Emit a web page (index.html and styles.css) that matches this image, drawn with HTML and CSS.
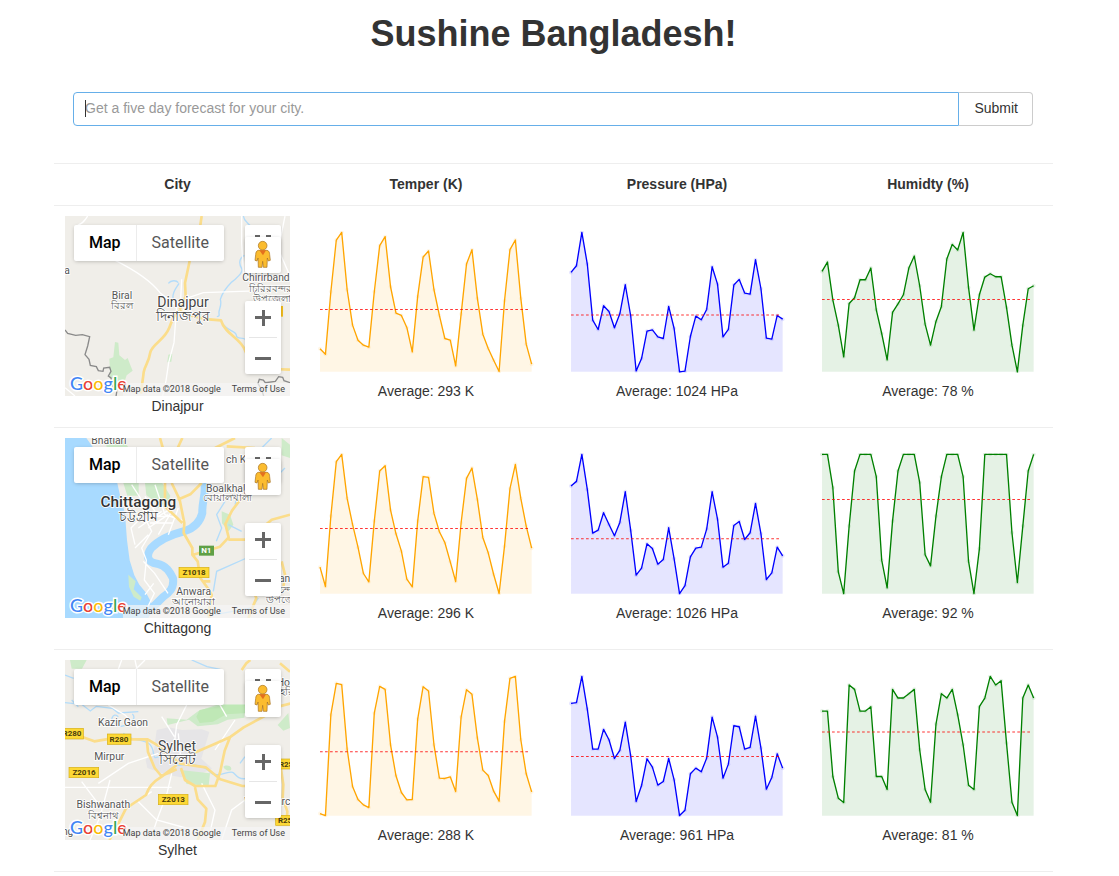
FILE: index.html
```
<!DOCTYPE html>
<html lang="en">
<head>
<meta charset="utf-8">
<meta name="viewport" content="width=device-width, initial-scale=1">
<title>Sushine Bangladesh!</title>
<link rel="stylesheet" href="styles.css">
</head>
<body>
<main class="page">
  <h1 class="title">Sushine Bangladesh!</h1>
  <form class="search">
    <div class="search-field">
      <input class="search-input" type="text" aria-label="City" placeholder="Get a five day forecast for your city.">
    </div>
    <button class="search-button" type="submit">Submit</button>
  </form>

  <table class="forecast">
    <thead>
      <tr><th class="city-col">City</th><th>Temper (K)</th><th>Pressure (HPa)</th><th>Humidty (%)</th></tr>
    </thead>
    <tbody>
      <tr>
        <td class="city">
          <div class="map">
            <svg class="map-canvas" viewBox="30 30 675 540" role="img" aria-label="Map of Dinajpur">
              <rect class="land" x="30" y="30" width="675" height="540"/>
              <path class="park" d="M180 408l10 2 3 38 17 14 8-6 10 26 5 12-18 14-6 18-20 4-12-12-14-4 2-20-2-36 12-4z"/>
              <path class="park" d="M340 446l12-3-3 24-12 2z"/>
              <path class="water" d="M565 30c2 18 16 20 22 32M340 232c8-10 24-10 30-2M372 232c-8 14-20 24-18 44M568 148c-20 12-14 30-8 40s-18 32-32 42c-14 14-26 30-32 50 6 20-6 30-4 42s-4 8-6 10M500 348c14 28 44 26 44 40s20 4 26 12"/>
              <path class="lane" d="M98 30c-10 14-10 20-30 28M175 160c60 30 110 60 140 100l50 40M380 220l-4 80M365 300l-8 110-16 60-8 54-10 46M385 280l60-20 170-6M378 320l26-30-6-24M30 545l30 25M560 30v80l6 100M690 30l-20 100 35 80"/>
              <path class="road" d="M440 30l-4 28M404 165l-14 66 2 40-18 40M374 315c-20 8-26 40-32 52-14 36-50 46-56 72-6 36-16 36-20 60-2 20-6 40-8 64M374 315c40 20 80 26 124 28 12 42 60 54 72 90l20 44 60 12 55 2"/>
              <path class="border" d="M30 372l8 10 24 6 20-2 22 6-6 28-8 26 12 14 4 18 18 4 6 12 14 2 2-10 18-2 4 12-8 14 8 6 4 22 14 14-4 26M705 530l-18-6-4-10-12-2-10 14-30 4-6-8-12-2-4 12 12 22 8 26"/>
              <path d="M676 300h8v32h-8z" fill="#f2bd1d"/>
              <g class="label small">
                <text x="36" y="203">a</text>
                <text x="201" y="280">Biral</text><text x="201" y="309">বিরল</text>
                <text x="633" y="226">Chirirband</text><text x="646" y="258">চিরিরবন্দর</text><text x="650" y="287">উপজেলা</text>
              </g>
              <g class="label town"><text x="384" y="304">Dinajpur</text><text x="384" y="344">দিনাজপুর</text></g>
            </svg>
          </div>
          <div>Dinajpur</div>
        </td>
        <td><svg class="chart temperature" data-series="t1"></svg><div>Average: 293 K</div></td>
        <td><svg class="chart pressure" data-series="p1"></svg><div>Average: 1024 HPa</div></td>
        <td><svg class="chart humidity" data-series="h1"></svg><div>Average: 78 %</div></td>
      </tr>
      <tr>
        <td class="city">
          <div class="map">
            <svg class="map-canvas" viewBox="30 30 675 540" role="img" aria-label="Map of Chittagong">
              <rect class="land" x="30" y="30" width="675" height="540"/>
              <path class="sea" d="M30 30h64l30 42 30 30 30 50 10 45 16 60 6 80 8 60 14 45 15 28 20 24 15 28 6 20-14 28H30z"/>
              <path class="park" d="M150 30h50l20 28-64 5zM205 165h46v38h-34zM270 165h52l24 38-10 32-26 5-12-22-24-16zM220 440l22 20-6 24 24 24-4 10-20-12-14-30zM500 250l25 10 10 30-14 20-20-24zM680 30l25 20v40l-25-8z"/>
              <path class="channel" d="M448 165c6 30-8 60-6 90-6 24-22 44-52 54-40 10-76 24-102 52-16 24-10 42 18 46 30 6 40 28 48 44 4 30-12 44-30 56l-34 34"/>
              <path class="water" d="M590 160l-40 30-10 40M510 220l-25 40 15 40-16 40M560 310l-40-20M575 390l-90 40-10 60M610 510l-20 30-110 20M650 30l-30 30M460 100l-20 65M690 120l-30 30"/>
              <path class="lane" d="M230 170l26 40 14 60 20 40-30 50 14 36-6 60 30 40-20 42M270 205l40 60 50-30M250 300l70-50M280 300l60-40M300 170l30 90 60 20M310 320l40-70M340 320l30-80M240 360l40-40M265 400l34 36 40 60M270 500l26-34M240 350l-12-50 20-20M285 285h70M300 265h60"/>
              <path class="road" d="M315 30l8 28M382 30l-14 30M540 30l-60 30M330 165v70l52 50M440 165l-34 34-38 16M350 165l24 50 14 70-2 30 26 45v20l16 20 8 50 22 30 12 20-10 60 20 60M415 380l80-24 26-28-10-40 20-40 60-80 60-30M520 335h60l70-60 55-15M600 60l-85-5M680 400l10 40-5 40M580 570l24-60-30-70M446 460h20"/>
              <rect x="432" y="353" width="45" height="30" fill="#5fa046"/><text class="shield light" x="454" y="376">N1</text>
              <rect class="plate" x="372" y="418" width="90" height="31"/><text class="shield" x="417" y="442">Z1018</text>
              <g class="label small">
                <text x="162" y="48">Bhatiari</text>
                <text x="552" y="105">ch Kh</text><text x="516" y="191">Boalkhali</text><text x="516" y="220">বোয়ালখালী</text>
                <text x="416" y="501">Anwara</text><text x="416" y="530">আনোয়ারা</text>
                <text x="706" y="463">anda</text><text x="706" y="494">চন্দনা</text><text x="690" y="524">উপজেলা</text>
              </g>
              <g class="label city-label"><text x="250" y="237">Chittagong</text></g>
              <g class="label town"><text x="251" y="279">চট্টগ্রাম</text></g>
            </svg>
          </div>
          <div>Chittagong</div>
        </td>
        <td><svg class="chart temperature" data-series="t2"></svg><div>Average: 296 K</div></td>
        <td><svg class="chart pressure" data-series="p2"></svg><div>Average: 1026 HPa</div></td>
        <td><svg class="chart humidity" data-series="h2"></svg><div>Average: 92 %</div></td>
      </tr>
      <tr>
        <td class="city">
          <div class="map">
            <svg class="map-canvas" viewBox="30 30 675 540" role="img" aria-label="Map of Sylhet">
              <rect class="land" x="30" y="30" width="675" height="540"/>
              <path d="M305 240l36-8 40 8 60-2 22 8-12 40-12 40 32 30-34 16-60 10-50-10-50-18-5-24 25-30z" fill="#e6e5e7"/>
              <path class="park" d="M335 205l60 4 35-26 60-20h80l-2 40-50 6-30 14-60 6-26-20-64 16zM45 30h50l-14 26H50zM375 360l90 10-4 38-66-6zM668 225l32-36 5 45-20 8zM505 350c6-6 24-4 24 6s-20 6-24-6z"/>
              <path d="M424 200l10-20 76-15h60l10 24-66 4-40 22-40 4z" fill="#bfe8b6"/>
              <path class="water" d="M410 30l46 20 40 8M30 158l50 5 26 20 18-14 48 6 18 14 60-4M190 200c-16-16-30 14-8 26s70-16 50-34M205 250c30 30 60 12 80 34s0 50 30 34 36 34 60 28 70-2 90 20 60-8 70 2 16 20 36 18M30 75l26 10M555 340l15-20M50 150l20 20"/>
              <path class="lane" d="M200 30l-10 28M240 30l6 28M160 165l50 30 40 40M395 165l-30 60-10 80M540 210l-60 90M395 120l80 10 40 70M370 250l4 50 6 36M320 200l38 60M165 390l-30 110-30 70M130 400l90-60 90-30M80 395l60 80M350 370l-14 60-30 80-20 60M440 400l40 80-20 90M245 450l60 60 110 30M500 570l30-90 40-30M30 412h320M560 570l60-20M270 30l-30 30M230 465l60-40"/>
              <path class="road" d="M30 262h54l34 12 48-8 30 2h82l30 18 20 20 42 30M275 266l4 40 20 48 20 24 46-20M418 308l66-28 40-18 42-30 60-32 44-30 55-14M525 262l-16 40-14 66-14 40H420l-30-18-12-36M372 340l80 12 44 36 66 20h60M365 345l-44 34c-30 18-40 34-48 56l-60 40-30 60-20 35M420 412l8 36 26 28-4 40-22 54M677 350l8 54-2 40 14 40-2 30M560 60l14-20 12-10M705 65l-30-25"/>
              <rect class="plate" x="15" y="235" width="70" height="32"/><text class="shield" x="51" y="259">R280</text>
              <rect class="plate" x="157" y="252" width="71" height="31"/><text class="shield" x="192" y="275">R280</text>
              <rect class="plate" x="42" y="352" width="89" height="31"/><text class="shield" x="87" y="375">Z2016</text>
              <rect class="plate" x="310" y="433" width="89" height="31"/><text class="shield" x="355" y="456">Z2013</text>
              <rect class="plate" x="666" y="327" width="60" height="30"/><text class="shield" x="700" y="350">R250</text>
              <rect class="plate" x="662" y="496" width="60" height="30"/><text class="shield" x="697" y="518">R250</text>
              <g class="label small">
                <text x="204" y="227">Kazir Gaon</text><text x="163" y="330">Mirpur</text>
                <text x="145" y="475">Bishwanath</text><text x="145" y="506">বিশ্বনাথ</text>
                <text x="38" y="555">ng</text><text x="694" y="107">Hori</text><text x="695" y="134">হরি</text>
                <text x="637" y="465">Wazirbarc</text>
              </g>
              <g class="label town"><text x="366" y="304">Sylhet</text><text x="366" y="342">সিলেট</text></g>
            </svg>
          </div>
          <div>Sylhet</div>
        </td>
        <td><svg class="chart temperature" data-series="t3"></svg><div>Average: 288 K</div></td>
        <td><svg class="chart pressure" data-series="p3"></svg><div>Average: 961 HPa</div></td>
        <td><svg class="chart humidity" data-series="h3"></svg><div>Average: 81 %</div></td>
      </tr>
    </tbody>
  </table>
</main>

<template id="map-controls">
  <span class="logo" aria-label="Google"><span class="blue">G</span><span class="red">o</span><span class="yellow">o</span><span class="blue">g</span><span class="green">l</span><span class="red">e</span></span>
  <div class="map-type">
    <button type="button" class="type-button active">Map</button>
    <button type="button" class="type-button">Satellite</button>
  </div>
  <button type="button" class="control fullscreen" aria-label="Toggle fullscreen">
    <svg viewBox="0 0 36 36"><path d="M10 17v-7h5v2h-3v5zM21 10h5v7h-2v-5h-3z" fill="#666"/></svg>
  </button>
  <button type="button" class="control pegman" aria-label="Street View">
    <svg viewBox="570 93 108 108">
      <g fill="#fbbc2f" stroke="#a4701f" stroke-width="2">
        <path d="M610 133c-6 1-8 7-8 13l-2 17 6 2 3-9 1 28h11l2-18 2 18h11l1-28 3 9 6-2-2-17c0-6-2-12-8-13z"/>
        <circle cx="623" cy="119" r="13"/>
      </g>
      <path d="M613 133h20l-9 15z" fill="#e4701e"/>
    </svg>
  </button>
  <div class="zoom">
    <button type="button" class="zoom-button" aria-label="Zoom in"><svg viewBox="0 0 16 16"><path d="M7 0h3v6h6v3h-6v7H7V9H0V6h7z" fill="#666"/></svg></button>
    <button type="button" class="zoom-button" aria-label="Zoom out"><svg viewBox="0 0 16 16"><path d="M0 6h16v3H0z" fill="#666"/></svg></button>
  </div>
  <div class="credits"><span>Map data ©2018 Google</span><a href="#terms">Terms of Use</a></div>
</template>
<script src="script.js"></script>
</body>
</html>
```

FILE: styles.css
```
* { box-sizing: border-box; }

body {
  margin: 0;
  background: #fff;
  color: #333;
  font: 14px/21px "Liberation Sans", Arial, sans-serif;
}

.page { padding: 12px 66px 0 54px; }

.title {
  margin: 0;
  font-size: 36px;
  line-height: 43px;
  text-align: center;
}

.search {
  display: flex;
  margin: 37px 20px 37px 19px;
}

.search-field {
  position: relative;
  flex: 1;
}

/* Text caret at the start of the field */
.search-field::before {
  position: absolute;
  top: 8px;
  left: 12px;
  width: 1px;
  height: 17px;
  background: #333;
  content: "";
}

.search-input,
.search-button {
  height: 34px;
  padding: 0 11px 2px;
  border: 1px solid #ccc;
  background: #fff;
  color: #333;
  font: inherit;
}

.search-input {
  display: block;
  width: 100%;
  border-color: #66afe9;
  border-radius: 4px 0 0 4px;
  outline: 0;
}

.search-input::placeholder { color: #999; opacity: 1; }

.search-button {
  padding: 0 14px 2px 15px;
  border-left: 0;
  border-radius: 0 4px 4px 0;
}

.forecast {
  width: 100%;
  border-collapse: separate;
  border-spacing: 0;
  border-bottom: 1px solid #eee;
  table-layout: fixed;
  text-align: center;
}

.forecast th,
.forecast td {
  padding: 10px 17px 10px 18px;
  border-top: 1px solid #eee;
  vertical-align: middle;
}

.forecast .city-col { width: 246px; }

.forecast .city { padding: 10px 10px 10px 11px; }

.map {
  position: relative;
  height: 180px;
  overflow: hidden;
  font-family: Roboto, sans-serif;
}

.map-canvas { display: block; width: 100%; height: 100%; }

.land { fill: #f0eee9; }
.sea { fill: #a8daff; }
.channel { fill: none; stroke: #a8daff; stroke-width: 24; stroke-linejoin: round; }
.park { fill: #ceebc9; }
.water { fill: none; stroke: #b3dcfa; stroke-width: 4; }
.lane { fill: none; stroke: #fff; stroke-width: 4; }
.road { fill: none; stroke: #fbdd8b; stroke-width: 8; stroke-linejoin: round; }
.border { fill: none; stroke: #8a8a8a; stroke-width: 4; }
.plate { fill: #fdd835; stroke: #d6ae18; stroke-width: 2; }

.shield {
  fill: #4b3d0c;
  font-size: 24px;
  font-weight: 700;
  text-anchor: middle;
}

.shield.light { fill: #fff; }

.label {
  fill: #555;
  stroke: #fff;
  stroke-width: 5px;
  paint-order: stroke;
  text-anchor: middle;
}

.small { font-size: 31px; }
.town { fill: #444; font-size: 42px; }
.city-label { fill: #333; font-size: 46px; font-weight: 500; }

.logo {
  position: absolute;
  bottom: 1px;
  left: 5px;
  font: 500 18px/24px Lato, sans-serif;
  -webkit-text-stroke: 3px #fff;
  paint-order: stroke;
}

.blue { color: #4285f4; }
.red { color: #ea4335; }
.yellow { color: #fbbc05; }
.green { color: #34a853; }

.map-type {
  position: absolute;
  top: 9px;
  left: 9px;
  display: flex;
  border-radius: 2px;
  background: #fff;
  box-shadow: 0 1px 4px -1px rgba(0, 0, 0, .3);
}

.type-button {
  height: 36px;
  padding: 0 15px;
  border: 0;
  background: none;
  color: #565656;
  font: 16px/36px Roboto, sans-serif;
}

.type-button + .type-button { border-left: 1px solid #ececec; }
.type-button.active { color: #000; font-weight: 500; }

.control,
.zoom {
  position: absolute;
  right: 9px;
  width: 36px;
  border: 0;
  border-radius: 2px;
  background: #fff;
  box-shadow: 0 1px 4px -1px rgba(0, 0, 0, .3);
}

.control { height: 36px; padding: 0; }
.control svg { display: block; }
.fullscreen { top: 9px; }
.pegman { top: 21px; }

.zoom { top: 85px; padding: 0 4px; }

.zoom-button {
  display: flex;
  width: 100%;
  height: 36px;
  padding: 0 0 2px;
  border: 0;
  background: none;
  align-items: center;
  justify-content: center;
}

.zoom-button + .zoom-button { height: 37px; padding: 5px 0 0; border-top: 1px solid #e6e6e6; }
.zoom-button svg { width: 16px; height: 16px; }

.credits {
  position: absolute;
  right: 0;
  bottom: 0;
  display: flex;
  background: rgba(245, 245, 245, .7);
  color: #444;
  font-size: 9px;
  line-height: 13px;
  white-space: nowrap;
}

.credits span { padding-right: 6px; }
.credits a { padding: 0 5px; color: #444; text-decoration: none; }

.chart { display: block; width: 100%; margin-bottom: 8px; }
.chart .area { fill: currentColor; opacity: .1; }
.chart .line { fill: none; stroke: currentColor; stroke-width: 4; stroke-linejoin: round; }
.chart .spot { fill: currentColor; opacity: .1; }
.chart .mean { stroke: red; stroke-width: 3; stroke-dasharray: 8 7; opacity: .8; }

.temperature { color: orange; }
.pressure { color: blue; }
.humidity { color: green; }
```

FILE: script.js
```
const series = {
  t1: { mean: 271, points: [389,405,218,63,40,212,318,363,378,384,218,80,53,203,282,289,325,398,232,114,96,212,289,358,363,440,285,135,92,238,345,388,423,457,245,92,63,238,375,435] },
  p1: { mean: 288, points: [160,140,40,135,303,331,260,277,326,284,197,290,455,418,336,332,353,358,262,328,458,456,352,291,302,271,143,195,353,331,198,181,222,225,122,209,357,360,289,300] },
  h1: { mean: 241, points: [157,129,243,318,413,253,236,182,182,147,272,343,422,280,254,227,147,111,200,315,378,307,262,120,76,93,40,205,333,227,174,164,173,173,265,378,458,318,209,200] },
  t2: { mean: 262, points: [378,436,225,62,40,172,250,318,397,422,240,90,74,207,278,330,414,437,240,107,109,217,272,304,362,421,245,112,81,175,289,335,400,457,315,143,70,172,255,321] },
  p2: { mean: 293, points: [135,121,40,145,276,267,215,250,284,244,152,268,402,381,308,322,369,355,260,353,457,433,347,321,318,264,152,234,378,366,253,241,295,275,187,278,415,395,318,344] },
  h2: { mean: 175, points: [40,40,140,392,457,255,90,40,40,40,107,357,440,240,90,40,40,40,124,341,374,225,107,40,40,40,107,360,457,323,40,40,40,40,40,275,424,255,90,40] },
  t3: { mean: 266, points: [451,457,155,61,65,258,370,409,425,433,150,70,79,245,338,388,410,409,168,71,84,245,345,346,341,385,162,80,94,225,321,337,384,414,175,46,40,230,332,386] },
  p3: { mean: 280, points: [121,119,40,138,258,258,199,230,286,262,177,278,415,367,287,312,366,355,286,350,457,441,332,315,326,285,162,222,345,303,188,191,258,253,159,255,378,343,272,315] },
  h3: { mean: 207, points: [144,144,340,405,418,66,79,144,144,131,340,340,379,79,105,105,92,79,260,379,417,183,92,105,79,155,245,366,379,131,105,40,66,53,240,417,457,105,66,105] }
};

const chartWidth = 634;
const baseline = 458;

document.querySelectorAll('.chart').forEach((chart) => {
  const { mean, points } = series[chart.dataset.series];
  const xy = points.map((y, i) => [(i * chartWidth / (points.length - 1)).toFixed(1), y]);
  const line = xy.map((p) => p.join(',')).join(' ');
  chart.setAttribute('viewBox', '-6 36 647 425');
  chart.innerHTML =
    `<polygon class="area" points="0,${baseline} ${line} ${chartWidth},${baseline}"/>` +
    `<polyline class="line" points="${line}"/>` +
    xy.map(([x, y]) => `<circle class="spot" cx="${x}" cy="${y}" r="6"/>`).join('') +
    `<line class="mean" x1="0" x2="${chartWidth - 6}" y1="${mean}" y2="${mean}"/>`;
});

const controls = document.getElementById('map-controls');
document.querySelectorAll('.map').forEach((map) => map.append(controls.content.cloneNode(true)));
```
